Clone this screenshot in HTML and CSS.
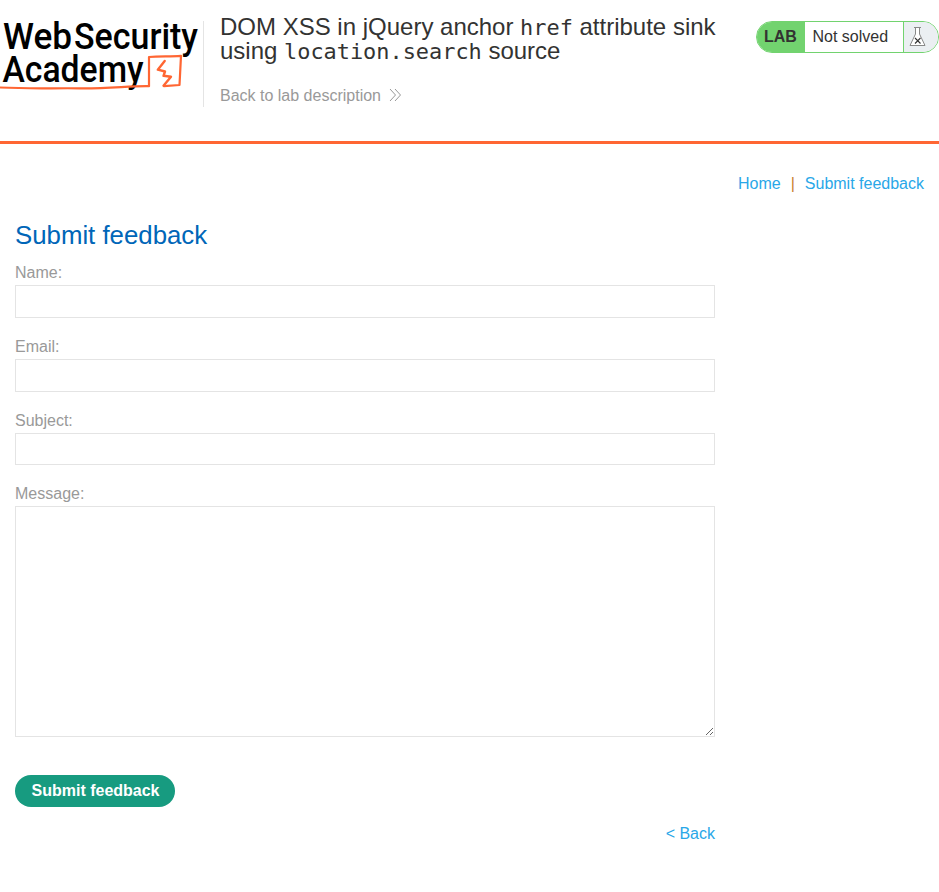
FILE: index.html
```html
<!DOCTYPE html>
<html lang="en">
<head>
<meta charset="utf-8">
<title>DOM XSS in jQuery anchor href attribute sink</title>
<link rel="stylesheet" href="styles.css">
</head>
<body>
<header class="lab-header">
  <svg class="logo" width="203" height="76" viewBox="0 0 203 76" role="img" aria-label="Web Security Academy">
    <text class="logo-text" x="3" y="28.3" textLength="69" lengthAdjust="spacingAndGlyphs">Web</text>
    <text class="logo-text" x="74" y="28.3" textLength="124" lengthAdjust="spacingAndGlyphs">Security</text>
    <text class="logo-text" x="2.5" y="60.8" textLength="141" lengthAdjust="spacingAndGlyphs">Academy</text>
    <g fill="none" stroke="#ff6633" stroke-linejoin="round" stroke-linecap="round">
      <path stroke-width="2.2" d="M0 66.5C30 68 50 67 80 67.3S130 64.8 149 65.2L149 36C160 35 170 35.8 181 34.9L179.5 64L164 65.2"/>
      <path stroke-width="2.4" d="M164.7 40L157.8 48.7L165 50.5L163.5 54.8L171 55.7L163.5 64.7"/>
    </g>
  </svg>
  <div class="lab-title">
    <h1>DOM XSS in jQuery anchor <code>href</code> attribute sink<br>using <code>location.search</code> source</h1>
    <a class="description-link" href="#">Back to lab description
      <svg width="13" height="14" viewBox="0 0 13 14" fill="none" stroke="#999"><path d="M1 1l5.5 6L1 13M6 1l5.5 6L6 13"/></svg>
    </a>
  </div>
  <div class="status">
    <span class="status-tag">LAB</span>
    <span class="status-text">Not solved</span>
    <span class="status-icon">
      <svg width="17" height="21" viewBox="0 0 17 21" fill="none"><path fill="#fff" stroke="#888" d="M5 1.5H12M6.5 2V8L1 19.5H16L10.5 8V2"/><path stroke="#333" stroke-width="1.1" d="M6 12l5.5 5.5m0-5.5l-5.5 5.5"/></svg>
    </span>
  </div>
</header>
<main>
  <nav><a href="#">Home</a><span class="separator">|</span><a href="#">Submit feedback</a></nav>
  <h2>Submit feedback</h2>
  <form>
    <label for="name">Name:</label>
    <input id="name" type="text">
    <label for="email">Email:</label>
    <input id="email" type="text">
    <label for="subject">Subject:</label>
    <input id="subject" class="compact" type="text">
    <label for="message">Message:</label>
    <textarea id="message"></textarea>
    <button type="button">Submit feedback</button>
    <a class="back" href="#">&lt; Back</a>
  </form>
</main>
</body>
</html>
```
FILE: styles.css
```css
* { box-sizing: border-box; }
body { margin: 0; background: #fff; font: 16px/20px "Liberation Sans", Arial, sans-serif; color: #333332; }
a { color: #29a7e8; text-decoration: none; }
.lab-header { display: flex; align-items: flex-start; height: 144px; padding-top: 21px; border-bottom: 3px solid #ff6633; }
.logo { display: block; flex: none; overflow: visible; }
.logo-text { font: 500 37px Roboto, sans-serif; fill: #000; }
.lab-title { width: 553px; height: 86px; padding-left: 16px; border-left: 1px solid #e4e4e4; }
h1 { margin: -6px 0 0; font-size: 24px; line-height: 24px; font-weight: 400; white-space: nowrap; }
code { font: 21.9px/20px "DejaVu Sans Mono", monospace; }
.description-link { display: flex; align-items: center; gap: 8px; margin-top: 23px; color: #999; }
.description-link svg { margin-top: -2px; }
.status { display: flex; flex: none; width: 183px; height: 32px; overflow: hidden; border: 1px solid #72d36f; border-radius: 16px; line-height: 30px; }
.status-tag { width: 48px; padding-left: 7px; background: #72d36f; font-weight: 700; }
.status-text { width: 98px; padding-left: 7.5px; }
.status-icon { flex: 1; padding: 4px 0 0 5px; border-left: 1px solid #72d36f; background: #ebeff2; line-height: 0; }
main { padding: 30px 15px 0; }
nav { display: flex; justify-content: flex-end; }
.separator { margin: 0 10px; color: #c9822c; }
h2 { margin: 26px 0 12px; color: #0066b8; font-size: 25.8px; line-height: 30px; font-weight: 400; }
form { display: flex; flex-direction: column; width: 700px; }
label { height: 23px; padding-top: 1px; color: #999; }
input, textarea { margin: 0; padding: 4px; border: 1px solid #e4e4e4; border-radius: 0; background: #fff; outline: 0; font: inherit; }
input { height: 33px; margin-bottom: 18px; }
input.compact { height: 32px; }
textarea { height: 231px; resize: both; }
button { align-self: flex-start; width: 160px; height: 32px; margin-top: 38px; padding: 0 0 0 1px; border: 0; border-radius: 16px; background: #179b80; color: #fff; font: 700 16px "Liberation Sans", Arial, sans-serif; }
.back { align-self: flex-end; margin-top: 17px; }
```
